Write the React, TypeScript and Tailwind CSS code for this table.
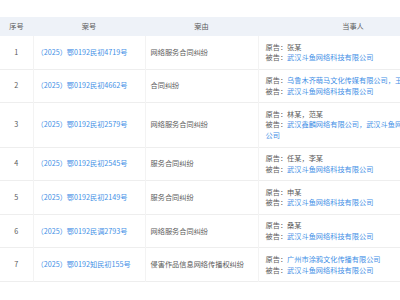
import React from 'react';

interface CaseRow {
  no: number;
  caseNo: string;
  cause: string;
  plaintiff: string;
  plaintiffLink?: boolean;
  defendant: string;
}

const rows: CaseRow[] = [
  { no: 1, caseNo: '（2025）鄂0192民初4719号', cause: '网络服务合同纠纷', plaintiff: '张某', defendant: '武汉斗鱼网络科技有限公司' },
  { no: 2, caseNo: '（2025）鄂0192民初4662号', cause: '合同纠纷', plaintiff: '乌鲁木齐萌马文化传媒有限公司，王某', plaintiffLink: true, defendant: '武汉斗鱼网络科技有限公司' },
  { no: 3, caseNo: '（2025）鄂0192民初2579号', cause: '网络服务合同纠纷', plaintiff: '林某，范某', defendant: '武汉鑫麟网络有限公司，武汉斗鱼网络科技有限公司' },
  { no: 4, caseNo: '（2025）鄂0192民初2545号', cause: '服务合同纠纷', plaintiff: '任某，李某', defendant: '武汉斗鱼网络科技有限公司' },
  { no: 5, caseNo: '（2025）鄂0192民初2149号', cause: '服务合同纠纷', plaintiff: '申某', defendant: '武汉斗鱼网络科技有限公司' },
  { no: 6, caseNo: '（2025）鄂0192民调2793号', cause: '网络服务合同纠纷', plaintiff: '桑某', defendant: '武汉斗鱼网络科技有限公司' },
  { no: 7, caseNo: '（2025）鄂0192知民初155号', cause: '侵害作品信息网络传播权纠纷', plaintiff: '广州市涂鸦文化传播有限公司', plaintiffLink: true, defendant: '武汉斗鱼网络科技有限公司' },
];

export default function App() {
  return (
    <div
      className="w-[400px] h-[300px] overflow-hidden bg-white pt-[17px] text-[7.2px] leading-[10.8px] text-[#5a5a5a]"
      style={{ fontFamily: '"Noto Sans CJK SC", "Noto Sans", sans-serif' }}
    >
      <table className="table-fixed w-[448px] border-collapse">
        <colgroup>
          <col className="w-[33px]" />
          <col className="w-[112px]" />
          <col className="w-[113px]" />
          <col className="w-[190px]" />
        </colgroup>
        <thead>
          <tr className="bg-[#eef2f8] h-[19px]">
            <th className="font-normal text-center">序号</th>
            <th className="font-normal text-center">案号</th>
            <th className="font-normal text-center">案由</th>
            <th className="font-normal text-center">当事人</th>
          </tr>
        </thead>
        <tbody>
          {rows.map((r) => (
            <tr key={r.no} className="border-b border-[#eeeeee]">
              <td className="text-center py-[5.5px] border-r border-[#f3f3f3]">{r.no}</td>
              <td className="pl-[3px] pr-[4px] py-[5.5px] text-[#3f8fe6] border-r border-[#f3f3f3] whitespace-nowrap">{r.caseNo}</td>
              <td className="px-[5px] py-[5.5px] border-r border-[#f3f3f3] whitespace-nowrap">{r.cause}</td>
              <td className="px-[7px] py-[5.5px]">
                <div>
                  原告：<span className={r.plaintiffLink ? 'text-[#3f8fe6]' : ''}>{r.plaintiff}</span>
                </div>
                <div>
                  被告：<span className="text-[#3f8fe6]">{r.defendant}</span>
                </div>
              </td>
            </tr>
          ))}
        </tbody>
      </table>
    </div>
  );
}
